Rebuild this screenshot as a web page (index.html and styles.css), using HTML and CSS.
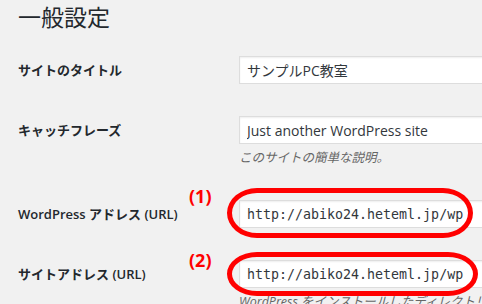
FILE: index.html
```html
<html>
<head>
  <title>一般設定</title>
  <meta http-equiv="Content-Type" content="text/html; charset=utf-8">
  <link rel="stylesheet" href="styles.css">
</head>
<body>
  <div class="wrap">
    <h1>一般設定</h1>
    <div class="form-table">
      <div class="row">
        <label class="label" for="blogname">サイトのタイトル</label>
        <div class="field">
          <input id="blogname" class="text" type="text" value="サンプルPC教室" />
        </div>
      </div>
      <div class="row">
        <label class="label" for="blogdescription">キャッチフレーズ</label>
        <div class="field">
          <input id="blogdescription" class="text" type="text" value="Just another WordPress site" />
          <p class="description">このサイトの簡単な説明。</p>
        </div>
      </div>
      <div class="row">
        <label class="label" for="siteurl">WordPress アドレス (URL)</label>
        <div class="field">
          <div class="marked">
            <span class="mark-no first">(1)</span>
            <input id="siteurl" class="text code" type="text" value="http://abiko24.heteml.jp/wp" />
            <span class="ring first"></span>
          </div>
        </div>
      </div>
      <div class="row">
        <label class="label" for="home">サイトアドレス (URL)</label>
        <div class="field">
          <div class="marked">
            <span class="mark-no second">(2)</span>
            <input id="home" class="text code" type="text" value="http://abiko24.heteml.jp/wp" />
            <span class="ring second"></span>
          </div>
          <p class="description">WordPress をインストールしたディレクトリと異なる場合はここに入力してください。</p>
        </div>
      </div>
    </div>
  </div>
</body>
</html>
```

FILE: styles.css
```css
html {
  box-sizing: border-box;
  overflow: hidden;
}
*, *:before, *:after {
  box-sizing: inherit;
}
body {
  margin: 0;
  padding: 0;
  background: #f1f1f1;
  color: #23282d;
  font-family: "Open Sans", "Noto Sans CJK JP", sans-serif;
  font-size: 13px;
  overflow: hidden;
}
.wrap {
  padding-left: 18px;
}
h1 {
  margin: 2px 0 0;
  font-size: 23px;
  line-height: 30px;
  font-weight: 400;
}
.form-table {
  margin-top: 8px;
}
.row {
  display: flex;
  align-items: flex-start;
  padding: 16px 0;
}
.label {
  flex: 0 0 221px;
  line-height: 28px;
  font-weight: 600;
  font-size: 13px;
}
.field {
  flex: 1;
}
input.text {
  display: block;
  width: 360px;
  height: 28px;
  margin: 0;
  padding: 3px 7px;
  border: 1px solid #ddd;
  background: #fff;
  color: #32373c;
  box-shadow: inset 0 1px 2px rgba(0,0,0,.07);
  font-family: "Open Sans", "Noto Sans CJK JP", sans-serif;
  font-size: 14px;
}
input.code {
  font-family: "DejaVu Sans Mono", monospace;
  font-size: 13.3px;
}
.description {
  margin: 4px 0 0;
  line-height: 20px;
  color: #666;
  font-style: italic;
  font-size: 12.5px;
  white-space: nowrap;
}
.marked {
  position: relative;
}
.mark-no {
  position: absolute;
  left: -50px;
  color: #f00;
  font-weight: 700;
  font-size: 18px;
  line-height: 20px;
  font-family: "Noto Sans", sans-serif;
}
.mark-no.first {
  top: -14px;
}
.mark-no.second {
  top: -10px;
}
.ring {
  position: absolute;
  left: -12px;
  border: 5px solid #f00;
  border-radius: 30px / 25px;
}
.ring.first {
  top: -12px;
  width: 246px;
  height: 50px;
}
.ring.second {
  top: -8px;
  width: 251px;
  height: 44px;
  border-radius: 30px / 22px;
}
```
